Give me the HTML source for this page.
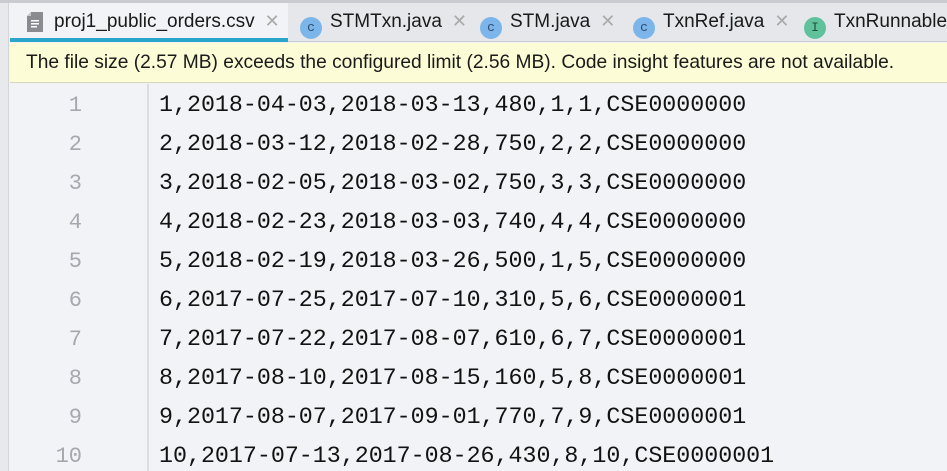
<!DOCTYPE html>
<html><head><meta charset="utf-8"><style>
*{margin:0;padding:0;box-sizing:border-box}
body{width:947px;height:471px;overflow:hidden;background:#f2f3f7;position:relative;font-family:"Liberation Sans",sans-serif}
#top{position:absolute;left:0;top:0;width:947px;height:3px;background:#c9cbd0}
#strip{position:absolute;left:0;top:3px;width:9px;height:468px;background:#e8e9ed;border-right:1px solid #d4d5da}
#tabs{position:absolute;left:10px;top:3px;right:0;height:39px;background:#e6e7eb;border-bottom:1px solid #c9cbd0}
.tab{position:absolute;top:0;height:39px;font-size:19px;color:#1a1a1a;line-height:37px;white-space:nowrap}
.tab .x{color:#aaa;font-size:18px;margin-left:10px}
.ic{display:inline-block;width:22px;height:22px;border-radius:50%;background:#7bb5ea;color:#2d4d6e;font-size:13px;text-align:center;line-height:22px;vertical-align:-4px;margin-right:8px;font-family:"Liberation Mono",monospace;position:relative}
#act{left:0;width:278px;background:#f2f3f7;border-bottom:4px solid #29a5c9}
#banner{position:absolute;left:10px;top:43px;right:0;height:40px;background:#fcfcd6;border-bottom:1px solid #d6d6c0;font-size:19.2px;line-height:40px;padding-left:16px;color:#1a1a1a;white-space:nowrap}
#gsep{position:absolute;left:147px;top:84px;width:2px;height:387px;background:#dcdde2}
.ln{position:absolute;left:10px;width:72px;text-align:right;font-family:"Liberation Mono",monospace;font-size:22px;color:#a6a8ae}
.cd{position:absolute;left:159px;font-family:"Liberation Mono",monospace;font-size:23.3px;color:#121212;white-space:pre}
</style></head><body>
<div id="top"></div><div id="strip"></div>
<div id="tabs">
<div class="tab" id="act"><svg width="16" height="20" viewBox="0 0 16 20" style="position:absolute;left:17px;top:9px"><path d="M4 0H16V20H0V4Z" fill="#8a8b90"/><path d="M0 4H4V0Z" fill="#c8c9cc"/><rect x="4" y="8" width="8" height="1.5" fill="#fff"/><rect x="4" y="11" width="8" height="1.5" fill="#fff"/><rect x="4" y="14" width="6" height="1.5" fill="#fff"/></svg><span style="position:absolute;left:44px">proj1_public_orders.csv<span class="x">✕</span></span></div>
<div class="tab" style="left:290px"><span class="ic">c</span>STMTxn.java<span class="x">✕</span></div>
<div class="tab" style="left:470px"><span class="ic">c</span>STM.java<span class="x">✕</span></div>
<div class="tab" style="left:623px"><span class="ic">c</span>TxnRef.java<span class="x">✕</span></div>
<div class="tab" style="left:794px"><span class="ic" style="background:#5fc29c;color:#24503f">I</span>TxnRunnable.java</div>
</div>
<div id="banner">The file size (2.57 MB) exceeds the configured limit (2.56 MB). Code insight features are not available.</div>
<div id="gsep"></div>
<div class="ln" style="top:93px">1</div><div class="cd" style="top:92px">1,2018-04-03,2018-03-13,480,1,1,CSE0000000</div>
<div class="ln" style="top:132px">2</div><div class="cd" style="top:131px">2,2018-03-12,2018-02-28,750,2,2,CSE0000000</div>
<div class="ln" style="top:171px">3</div><div class="cd" style="top:170px">3,2018-02-05,2018-03-02,750,3,3,CSE0000000</div>
<div class="ln" style="top:210px">4</div><div class="cd" style="top:209px">4,2018-02-23,2018-03-03,740,4,4,CSE0000000</div>
<div class="ln" style="top:249px">5</div><div class="cd" style="top:248px">5,2018-02-19,2018-03-26,500,1,5,CSE0000000</div>
<div class="ln" style="top:288px">6</div><div class="cd" style="top:287px">6,2017-07-25,2017-07-10,310,5,6,CSE0000001</div>
<div class="ln" style="top:327px">7</div><div class="cd" style="top:326px">7,2017-07-22,2017-08-07,610,6,7,CSE0000001</div>
<div class="ln" style="top:366px">8</div><div class="cd" style="top:365px">8,2017-08-10,2017-08-15,160,5,8,CSE0000001</div>
<div class="ln" style="top:405px">9</div><div class="cd" style="top:404px">9,2017-08-07,2017-09-01,770,7,9,CSE0000001</div>
<div class="ln" style="top:444px">10</div><div class="cd" style="top:443px">10,2017-07-13,2017-08-26,430,8,10,CSE0000001</div>
</body></html>
